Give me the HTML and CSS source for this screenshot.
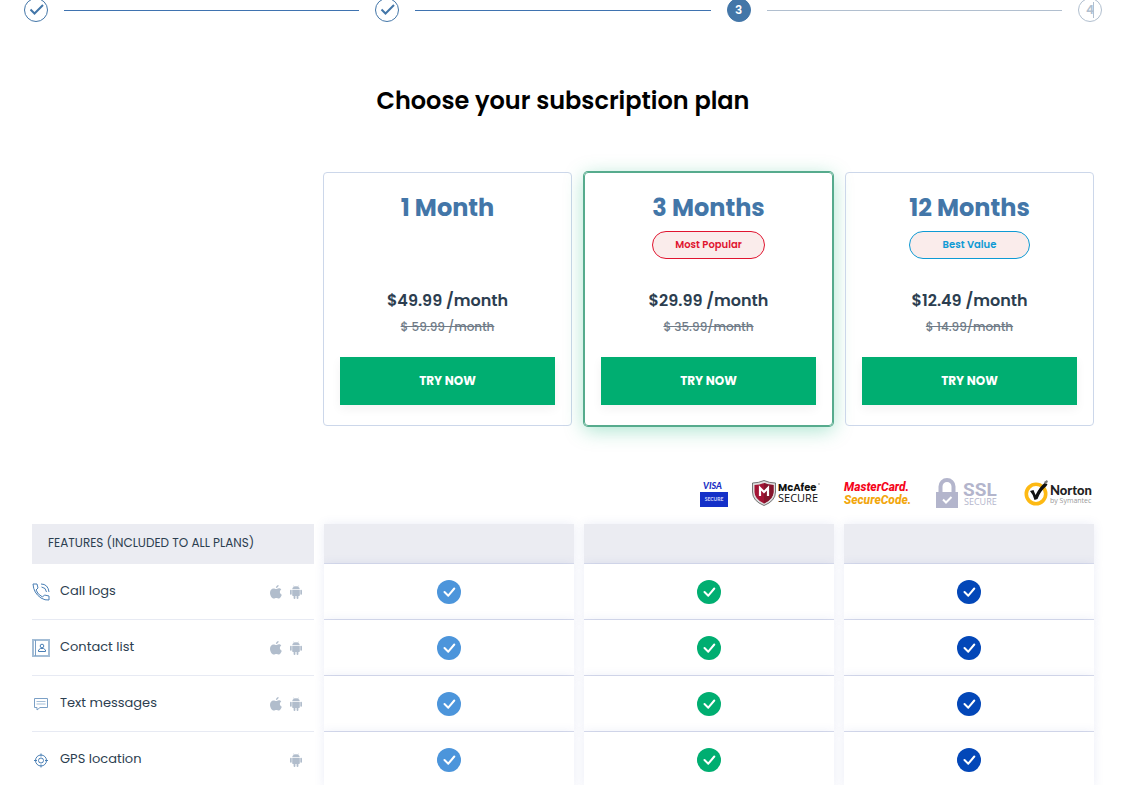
FILE: index.html
```html
<!DOCTYPE html>
<html lang="en">
  <head>
    <meta charset="UTF-8" />
    <meta name="viewport" content="width=device-width, initial-scale=1.0" />
    <title>Choose your subscription plan</title>
    <link rel="stylesheet" href="styles.css">
  </head>
  <body>
    <!-- shared icons -->
    <svg class="sprite" aria-hidden="true">
      <symbol id="step-check" viewBox="0 0 24 24">
        <path d="M6.500 11.500l4 4L19 7" fill="none" stroke="currentColor" stroke-width="2" />
      </symbol>
      <symbol id="check" viewBox="0 0 24 24">
        <circle cx="12" cy="12" r="12" fill="currentColor" />
        <path d="M7.500 12l3.800 3.700 6-7.200" fill="none" stroke="#fff" stroke-width="2" stroke-linecap="round" stroke-linejoin="round" />
      </symbol>
      <symbol id="apple" viewBox="0 0 12 14">
        <path d="M8.600 0c.1 1.600-1.200 3-2.700 3C5.800 1.500 7.100.2 8.600 0zM6.100 4c.6 0 1.500-.8 2.700-.8 1 0 1.900.5 2.500 1.400-2.100 1.300-1.800 4.200.5 5.100-.5 1.500-1.700 3.800-3.100 3.900-.9 0-1.300-.6-2.400-.6s-1.500.6-2.400.6C1.800 13.500 0 10.500 0 7.800c0-2.800 1.700-4.400 3.500-4.400 1.200 0 1.900.6 2.600.6z" fill="currentColor" />
      </symbol>
      <symbol id="android" viewBox="0 0 12 14">
        <path d="M2.200 4.300a3.800 3.300 0 0 1 1.700-2.600L3.200.7l.4-.3.8 1.100a4 4 0 0 1 3.200 0L8.400.4l.4.3-.7 1a3.800 3.300 0 0 1 1.700 2.600zM2.200 4.900h7.600v5.300a.8.800 0 0 1-.8.8h-.6v2a.9.900 0 0 1-1.800 0v-2H5.400v2a.9.900 0 0 1-1.800 0v-2H3a.8.800 0 0 1-.8-.8z" fill="currentColor" />
        <rect x="0" y="4.800" width="1.700" height="5" rx=".8" fill="currentColor" />
        <rect x="10.300" y="4.800" width="1.700" height="5" rx=".8" fill="currentColor" />
      </symbol>
    </svg>

    <div class="page">
      <ol class="steps">
        <li class="step done"><svg><use href="#step-check" /></svg></li>
        <li class="line"></li>
        <li class="step done"><svg><use href="#step-check" /></svg></li>
        <li class="line"></li>
        <li class="step current">3</li>
        <li class="line next"></li>
        <li class="step next">4<span class="caret"></span></li>
      </ol>

      <h1 class="title">Choose your subscription plan</h1>

      <div class="content">
        <div class="plans">
          <div class="plan">
            <h2 class="plan__name">1 Month</h2>
            <div class="plan__label"></div>
            <p class="plan__price">$49.99 /month</p>
            <p class="plan__old"><s>$ 59.99 /month</s></p>
            <button class="plan__button" type="button">TRY NOW</button>
          </div>
          <div class="plan plan--popular">
            <h2 class="plan__name">3 Months</h2>
            <div class="plan__label"><span class="badge badge--red">Most Popular</span></div>
            <p class="plan__price">$29.99 /month</p>
            <p class="plan__old"><s>$ 35.99/month</s></p>
            <button class="plan__button" type="button">TRY NOW</button>
          </div>
          <div class="plan">
            <h2 class="plan__name">12 Months</h2>
            <div class="plan__label"><span class="badge badge--blue">Best Value</span></div>
            <p class="plan__price">$12.49 /month</p>
            <p class="plan__old"><s>$ 14.99/month</s></p>
            <button class="plan__button" type="button">TRY NOW</button>
          </div>
        </div>

        <div class="logos">
          <svg width="28" height="32" viewBox="0 0 28 32">
            <text x="3" y="11" class="logo-bold" font-size="9" font-style="italic" fill="#1a2fc4">VISA</text>
            <rect y="14" width="28" height="15" fill="#1430c8" />
            <text x="14" y="23" class="logo-bold" font-size="5" text-anchor="middle" fill="#c3cbf5">SECURE</text>
          </svg>
          <svg width="68" height="32" viewBox="0 0 68 32">
            <path d="M.5 5q6 0 11.500-2.500Q17.500 5 23.500 5v9q0 9-11.500 13.500Q.5 23 .5 14z" fill="#ddd" stroke="#555" stroke-width=".8" />
            <path d="M2.500 7q5 0 9.500-2Q16.500 7 21.500 7v7q0 7-9.500 11.500Q2.500 21 2.500 14z" fill="#a31535" />
            <path d="M12 5Q16.500 7 21.500 7v7q0 7-9.500 11.500z" fill="#84152c" />
            <path d="M8 18V10l4 4 4-4v8" fill="none" stroke="#fff" stroke-width="2.200" />
            <text x="26" y="13" class="logo-mcafee" font-size="10" fill="#111">McAfee</text>
            <text x="26" y="24" class="logo-text" font-size="11" fill="#111">SECURE</text>
            <circle cx="67" cy="6" r=".8" fill="#777" />
          </svg>
          <svg width="68" height="32" viewBox="0 0 68 32">
            <text x="0" y="13" class="logo-master" font-size="12" fill="#f5051b">MasterCard.</text>
            <text x="0" y="26" class="logo-master" font-size="12" fill="#f2a60c">SecureCode.</text>
          </svg>
          <svg width="64" height="32" viewBox="0 0 64 32">
            <path d="M4.500 15V8.500a6.500 6.500 0 0 1 13 0V15" fill="none" stroke="#b3b5cc" stroke-width="4" />
            <rect y="14" width="22" height="16" fill="#b3b5cc" />
            <path d="M7 21.500l3 3 5.500-5.500" fill="none" stroke="#fff" stroke-width="2" />
            <text x="27" y="18" class="logo-ssl" font-size="19" fill="#b3b5cc">SSL</text>
            <text x="28" y="27" class="logo-text" font-size="9" fill="#b3b5cc">SECURE</text>
          </svg>
          <svg width="70" height="32" viewBox="0 0 70 32">
            <circle cx="12" cy="16" r="9.700" fill="none" stroke="#fdb913" stroke-width="3.600" />
            <path d="M6 13l3.500-1 2 5q4-8 9-12l3 1-1 2q-6 5-9 13l-3 1q-1-5-4.500-9z" fill="#111" />
            <path d="M20 4l3-2 1 2-3 2z" fill="#777" />
            <text x="26" y="17" class="logo-bold" font-size="13" fill="#222">Norton</text>
            <text x="26" y="25" class="logo-text" font-size="7" fill="#999">by Symantec</text>
          </svg>
        </div>

        <table class="features">
          <thead>
            <tr>
              <th scope="col" class="features__head">FEATURES (INCLUDED TO ALL PLANS)</th>
              <td class="cell head"></td>
              <td class="cell head"></td>
              <td class="cell head"></td>
            </tr>
          </thead>
          <tbody>
            <tr>
              <th scope="row">
                <div class="feature">
                  <svg class="feature__icon" viewBox="0 0 18 18">
                    <path d="M1 1h4l1 4-2 2q1.500 4.500 6.500 7l2-2 4.500 1v4q-4 .5-8-2Q1.500 10 1 1zM9 1q7 0 8 8M9.500 4q4.500.5 5 5" />
                  </svg>
                  <span class="feature__name">Call logs</span>
                  <svg class="os"><use href="#apple" /></svg>
                  <svg class="os"><use href="#android" /></svg>
                </div>
              </th>
              <td class="cell basic"><svg class="check"><use href="#check" /></svg></td>
              <td class="cell popular"><svg class="check"><use href="#check" /></svg></td>
              <td class="cell best"><svg class="check"><use href="#check" /></svg></td>
            </tr>
            <tr>
              <th scope="row">
                <div class="feature">
                  <svg class="feature__icon" viewBox="0 0 18 18">
                    <path d="M1 1h16v16H1z" stroke="#a3bdd6" stroke-width="2" />
                    <path d="M3.500 1v16" stroke="#7ba0c6" />
                    <circle cx="10" cy="7" r="1.800" />
                    <path d="M6.500 12.500V11l2-1.500h3l2 1.500v1.500z" />
                  </svg>
                  <span class="feature__name">Contact list</span>
                  <svg class="os"><use href="#apple" /></svg>
                  <svg class="os"><use href="#android" /></svg>
                </div>
              </th>
              <td class="cell basic"><svg class="check"><use href="#check" /></svg></td>
              <td class="cell popular"><svg class="check"><use href="#check" /></svg></td>
              <td class="cell best"><svg class="check"><use href="#check" /></svg></td>
            </tr>
            <tr>
              <th scope="row">
                <div class="feature">
                  <svg class="feature__icon" viewBox="0 0 18 18">
                    <path d="M2.500 3.500h13v9H8l-3 2.500v-2.500H2.500z" stroke="#7ba0c6" />
                    <path d="M4.500 6.500h9M4.500 9h9" stroke="#a3bdd6" />
                  </svg>
                  <span class="feature__name">Text messages</span>
                  <svg class="os"><use href="#apple" /></svg>
                  <svg class="os"><use href="#android" /></svg>
                </div>
              </th>
              <td class="cell basic"><svg class="check"><use href="#check" /></svg></td>
              <td class="cell popular"><svg class="check"><use href="#check" /></svg></td>
              <td class="cell best"><svg class="check"><use href="#check" /></svg></td>
            </tr>
            <tr>
              <th scope="row">
                <div class="feature">
                  <svg class="feature__icon" viewBox="0 0 18 18">
                    <circle cx="9" cy="9.500" r="5.500" />
                    <circle cx="9" cy="9.500" r="2.500" />
                    <path d="M9 2.500v3M9 13.500v3M2 9.500h3M13 9.500h3" />
                  </svg>
                  <span class="feature__name">GPS location</span>
                  <svg class="os"><use href="#android" /></svg>
                </div>
              </th>
              <td class="cell basic"><svg class="check"><use href="#check" /></svg></td>
              <td class="cell popular"><svg class="check"><use href="#check" /></svg></td>
              <td class="cell best"><svg class="check"><use href="#check" /></svg></td>
            </tr>
          </tbody>
        </table>
      </div>
    </div>
  </body>
</html>
```
FILE: styles.css
```css
* {
  padding: 0;
  margin: 0;
  box-sizing: border-box;
}

body {
  font-family: Poppins, Inter, sans-serif;
  color: #2c3e50;
  background: #fff;
}

.sprite {
  display: none;
}

.page {
  height: 100vh;
  overflow: hidden;
  padding: 0 31px 0 24px;
}

/* steps */
.steps {
  display: flex;
  align-items: center;
  gap: 16px;
  margin-top: -2px;
  list-style: none;
}

.step {
  position: relative;
  display: flex;
  justify-content: center;
  align-items: center;
  width: 24px;
  height: 24px;
  border: 1px solid #4376a8;
  border-radius: 50%;
  color: #4376a8;
  font-size: 12px;
  font-weight: 600;
}

.step svg {
  width: 24px;
  height: 24px;
  flex: none;
}

.step.current {
  background: #4376a8;
  color: #fff;
}

.step.next {
  border-color: #b1bfcf;
  color: #b1bfcf;
}

.caret {
  position: absolute;
  top: 3px;
  left: 14px;
  width: 1px;
  height: 16px;
  background: #b1bfcf;
}

.line {
  flex: 1;
  height: 1px;
  background: #3f73b0;
}

.line.next {
  background: #b1bfcf;
}

.title {
  margin-top: 61px;
  color: #000;
  font-size: 24px;
  line-height: 36px;
  font-weight: 600;
  text-align: center;
}

.content {
  padding: 0 8px;
}

/* plans */
.plans {
  display: grid;
  grid-template-columns: repeat(3, 1fr);
  gap: 12px;
  margin-top: 53px;
  margin-left: 291px;
}

.plan {
  padding: 17px 16px 20px;
  border: 1px solid #ccd7ea;
  border-radius: 4px;
  text-align: center;
}

.plan--popular {
  border-color: #56ab8d;
  box-shadow: 0 0 0 1px #56ab8d, 0 4px 20px rgba(0, 174, 113, 0.35);
}

.plan__name {
  color: #4376a8;
  font-size: 24px;
  line-height: 36px;
  font-weight: 700;
}

.plan__label {
  height: 57px;
  padding-top: 4px;
}

.badge {
  display: inline-block;
  padding: 0 22px;
  border: 1px solid;
  border-radius: 14px;
  background: #faeceb;
  font-size: 10px;
  line-height: 26px;
  font-weight: 600;
}

.badge--red {
  color: #e0142f;
}

.badge--blue {
  padding: 0 33px;
  color: #0e9ad4;
}

.plan__price {
  padding-top: 6px;
  font-size: 16px;
  line-height: 24px;
  font-weight: 600;
}

.plan__old {
  padding-top: 5px;
  color: #6f7b87;
  font-size: 12px;
  line-height: 18px;
  font-weight: 500;
}

.plan__button {
  display: block;
  width: 100%;
  height: 48px;
  margin-top: 21px;
  border: none;
  background: #00ae71;
  box-shadow: 0 4px 10px rgba(0, 0, 0, 0.05);
  color: #fff;
  font-family: inherit;
  font-size: 12px;
  font-weight: 700;
  cursor: pointer;
}

/* logos */
.logos {
  display: flex;
  justify-content: flex-end;
  gap: 24px;
  margin-top: 52px;
}

.logos svg {
  overflow: visible;
}

.logo-bold {
  font-family: Lato, sans-serif;
  font-weight: 900;
}

.logo-mcafee {
  font-family: Poppins, sans-serif;
  font-weight: 700;
}

.logo-text {
  font-family: "Open Sans", sans-serif;
}

.logo-master {
  font-family: Roboto, sans-serif;
  font-style: italic;
  font-weight: 800;
}

.logo-ssl {
  font-family: Roboto, sans-serif;
  font-weight: 700;
}

/* features */
.features {
  width: calc(100% + 20px);
  margin: 14px -10px 0;
  border-spacing: 10px 0;
  table-layout: fixed;
}

.features th {
  height: 56px;
  border-bottom: 1px solid #e7eaf3;
  font-size: 13px;
  font-weight: 400;
  text-align: left;
}

.features .features__head {
  width: 282px;
  height: 40px;
  padding: 0 16px 2px;
  border: none;
  background: #ebecf2;
  font-size: 12px;
}

.cell {
  border-bottom: 1px solid #d8dcec;
  background: #fff;
  box-shadow: 0 0 10px rgba(63, 81, 181, 0.1);
  text-align: center;
}

.cell.head {
  background: #ebecf2;
}

.feature {
  display: flex;
  align-items: center;
  gap: 8px;
  padding-right: 12px;
}

.feature__icon {
  width: 18px;
  height: 18px;
  fill: none;
  stroke: #4a7fb5;
}

.feature__name {
  flex: 1;
  padding: 0 0 2px 2px;
}

.os {
  width: 12px;
  height: 14px;
  color: #b1bdcc;
}

.check {
  display: block;
  width: 24px;
  height: 24px;
  margin: 0 auto;
}

.basic {
  color: #4c95db;
}

.popular {
  color: #00ae71;
}

.best {
  color: #0347b8;
}
```
